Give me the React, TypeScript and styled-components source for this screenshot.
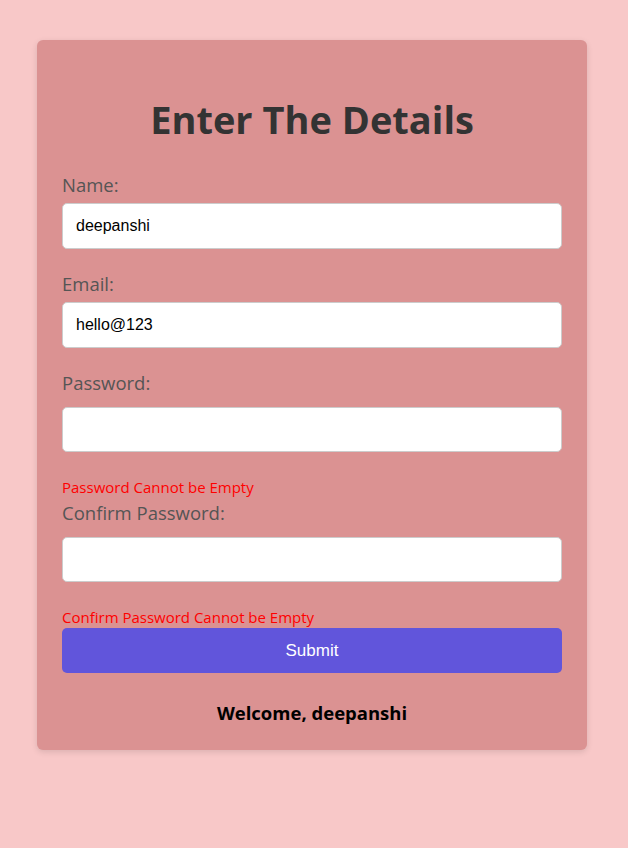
import React, { useState } from "react";
import styled, { createGlobalStyle } from "styled-components";

const GlobalStyle = createGlobalStyle`
  html, body {
    margin: 0;
    padding: 0;
    background: #f8c8c8;
    font-family: "Open Sans", "Noto Sans", sans-serif;
  }
`;

const Page = styled.div`
  min-height: 848px;
  padding-top: 40px;
  box-sizing: border-box;
`;

const Card = styled.form`
  width: 550px;
  margin-left: 37px;
  box-sizing: border-box;
  padding: 25px;
  background: #db9292;
  border-radius: 6px;
  box-shadow: 0 2px 6px rgba(0, 0, 0, 0.12);
  display: flex;
  flex-direction: column;
`;

const Title = styled.h1`
  margin: 30px 0 30px;
  font-size: 38px;
  line-height: 48px;
  font-weight: 700;
  color: #333;
  text-align: center;
`;

const Label = styled.label<{ $gap: number }>`
  display: block;
  font-size: 18.5px;
  line-height: 24px;
  color: #555;
  margin-bottom: ${(p) => p.$gap}px;
`;

const Input = styled.input<{ $h: number }>`
  display: block;
  width: 100%;
  height: ${(p) => p.$h}px;
  box-sizing: border-box;
  padding: 0 13px;
  border: 1px solid #ccc;
  border-radius: 5px;
  background: #fff;
  font-family: "Liberation Sans", Arial, sans-serif;
  font-size: 16px;
  color: #000;
  outline: none;
`;

const Field = styled.div<{ $mb: number }>`
  margin-bottom: ${(p) => p.$mb}px;
`;

const Error = styled.div<{ $mb: number }>`
  margin-top: 26px;
  margin-bottom: ${(p) => p.$mb}px;
  font-size: 15px;
  line-height: 19px;
  color: #ff0000;
`;

const SubmitButton = styled.button`
  height: 45px;
  width: 100%;
  border: none;
  border-radius: 5px;
  background: #6155db;
  color: #fff;
  font-family: "Liberation Sans", Arial, sans-serif;
  font-size: 17px;
  cursor: pointer;
`;

const Welcome = styled.h3`
  margin: 28px 0 0;
  font-size: 18.5px;
  line-height: 24px;
  font-weight: 700;
  color: #000;
  text-align: center;
`;

export default function App() {
  const [name, setName] = useState("deepanshi");
  const [email, setEmail] = useState("hello@123");
  const [password, setPassword] = useState("");
  const [confirm, setConfirm] = useState("");

  return (
    <Page>
      <GlobalStyle />
      <Card onSubmit={(e) => e.preventDefault()}>
        <Title>Enter The Details</Title>
        <Field $mb={23}>
          <Label $gap={6}>Name:</Label>
          <Input $h={46} value={name} onChange={(e) => setName(e.target.value)} />
        </Field>
        <Field $mb={23}>
          <Label $gap={6}>Email:</Label>
          <Input $h={46} value={email} onChange={(e) => setEmail(e.target.value)} />
        </Field>
        <Field $mb={0}>
          <Label $gap={12}>Password:</Label>
          <Input
            $h={45}
            type="password"
            value={password}
            onChange={(e) => setPassword(e.target.value)}
          />
        </Field>
        {password === "" && <Error $mb={4}>Password Cannot be Empty</Error>}
        <Field $mb={0}>
          <Label $gap={12}>Confirm Password:</Label>
          <Input
            $h={45}
            type="password"
            value={confirm}
            onChange={(e) => setConfirm(e.target.value)}
          />
        </Field>
        {confirm === "" && <Error $mb={1}>Confirm Password Cannot be Empty</Error>}
        <SubmitButton type="submit">Submit</SubmitButton>
        <Welcome>Welcome, {name}</Welcome>
      </Card>
    </Page>
  );
}
